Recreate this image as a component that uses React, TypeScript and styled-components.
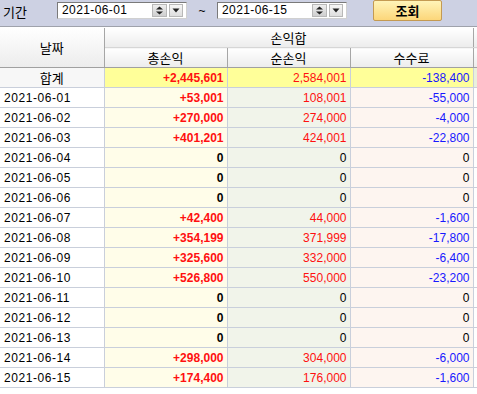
import React from 'react'
import styled, { createGlobalStyle } from 'styled-components'

type Row = {
    date: string,
    net: number,
    fee: number
}

const rows: Row[] = [
    { date: '2021-06-01', net: 108001, fee: -55000 },
    { date: '2021-06-02', net: 274000, fee: -4000 },
    { date: '2021-06-03', net: 424001, fee: -22800 },
    { date: '2021-06-04', net: 0, fee: 0 },
    { date: '2021-06-05', net: 0, fee: 0 },
    { date: '2021-06-06', net: 0, fee: 0 },
    { date: '2021-06-07', net: 44000, fee: -1600 },
    { date: '2021-06-08', net: 371999, fee: -17800 },
    { date: '2021-06-09', net: 332000, fee: -6400 },
    { date: '2021-06-10', net: 550000, fee: -23200 },
    { date: '2021-06-11', net: 0, fee: 0 },
    { date: '2021-06-12', net: 0, fee: 0 },
    { date: '2021-06-13', net: 0, fee: 0 },
    { date: '2021-06-14', net: 304000, fee: -6000 },
    { date: '2021-06-15', net: 176000, fee: -1600 },
]

const fmt = (n: number, sign = false) => {
    const s = Math.abs(n).toLocaleString('en-US')
    if (n < 0) return `-${s}`
    if (n > 0 && sign) return `+${s}`
    return s
}

type Tone = 'red' | 'blue' | 'plain'
const tone = (n: number, pos: Tone): Tone => (n === 0 ? 'plain' : pos)

const SpinIcon = () => (
    <svg width="9" height="9" viewBox="0 0 9 9">
        <path d="M4.5 0.5 L8 3.5 L1 3.5 Z" fill="#222" />
        <path d="M4.5 8.5 L8 5.5 L1 5.5 Z" fill="#222" />
    </svg>
)

const DownIcon = () => (
    <svg width="8" height="5" viewBox="0 0 8 5">
        <path d="M0.5 0.5 L7.5 0.5 L4 4.5 Z" fill="#222" />
    </svg>
)

const DateBox = ({ value }: { value: string }) => (
    <DateField>
        <DateText>{value}</DateText>
        <Spin><SpinIcon /></Spin>
        <Drop><DownIcon /></Drop>
    </DateField>
)

const App = () => {
    const sumNet = rows.reduce((a, r) => a + r.net, 0)
    const sumFee = rows.reduce((a, r) => a + r.fee, 0)

    return (
        <>
            <GlobalStyle />
            <Toolbar>
                <Label>기간</Label>
                <DateBox value="2021-06-01" />
                <Tilde>~</Tilde>
                <DateBox value="2021-06-15" />
                <SearchButton>조회</SearchButton>
            </Toolbar>
            <Grid>
                <colgroup>
                    <col style={{ width: 104 }} />
                    <col style={{ width: 123 }} />
                    <col style={{ width: 123 }} />
                    <col style={{ width: 123 }} />
                    <col style={{ width: 4 }} />
                </colgroup>
                <thead>
                    <tr>
                        <Head rowSpan={2} top>날짜</Head>
                        <Head colSpan={3} top>손익합</Head>
                        <Head top />
                    </tr>
                    <tr>
                        <Head>총손익</Head>
                        <Head>순손익</Head>
                        <Head>수수료</Head>
                        <Head />
                    </tr>
                </thead>
                <tbody>
                    <SumRow>
                        <SumLabel>합계</SumLabel>
                        <Cell bg="#ffff99" tone={tone(sumNet + sumFee, 'red')} bold>{fmt(sumNet + sumFee, true)}</Cell>
                        <Cell bg="#ffff99" tone={tone(sumNet, 'red')}>{fmt(sumNet)}</Cell>
                        <Cell bg="#ffff99" tone={tone(sumFee, 'blue')}>{fmt(sumFee)}</Cell>
                        <Cell bg="#e9f0dc" />
                    </SumRow>
                    {rows.map((r) => (
                        <tr key={r.date}>
                            <DateCell>{r.date}</DateCell>
                            <Cell bg="#fffde9" tone={tone(r.net + r.fee, 'red')} bold>{fmt(r.net + r.fee, true)}</Cell>
                            <Cell bg="#f1f4ea" tone={tone(r.net, 'red')}>{fmt(r.net)}</Cell>
                            <Cell bg="#fdf5f0" tone={tone(r.fee, 'blue')}>{fmt(r.fee)}</Cell>
                            <Cell bg="#ffffff" />
                        </tr>
                    ))}
                </tbody>
            </Grid>
        </>
    )
}

const GlobalStyle = createGlobalStyle`
    body {
        margin: 0;
        background: #fff;
        font-family: "Liberation Sans", "Noto Sans CJK KR", sans-serif;
        font-size: 12px;
        color: #000;
    }
`

const Toolbar = styled.div`
    height: 26px;
    background: #cdd1e3;
    border-bottom: 1px solid #9fa2ab;
    display: flex;
    align-items: center;
    padding: 0 0 0 3px;
    margin-bottom: 1px;
`

const Label = styled.span`
    font-family: "Noto Sans CJK KR", sans-serif;
    font-size: 13px;
    width: 54px;
    margin-top: -3px;
`

const DateField = styled.div`
    width: 121px;
    height: 15px;
    margin-top: -6px;
    background: #fff;
    border: 1px solid #7a7a7a;
    border-right-color: #d0d0d0;
    border-bottom-color: #d0d0d0;
    display: flex;
    align-items: center;
    padding: 0 3px 0 4px;
`

const DateText = styled.span`
    flex: 1;
    font-size: 12px;
    letter-spacing: 0.4px;
`

const Spin = styled.div`
    width: 13px;
    height: 11px;
    background: linear-gradient(#eeeeee, #cfcfcf);
    border: 1px solid #b8b8b8;
    display: flex;
    align-items: center;
    justify-content: center;
    margin-right: 2px;
`

const Drop = styled(Spin)`
    width: 12px;
    margin-right: 0;
    background: linear-gradient(#f6f6f6, #dedede);
`

const Tilde = styled.span`
    width: 30px;
    text-align: center;
    margin-top: -4px;
    font-size: 12px;
`

const SearchButton = styled.button`
    margin: -5px 0 0 26px;
    width: 69px;
    height: 21px;
    padding: 0;
    border: 1px solid #c49a52;
    border-radius: 2px;
    background: linear-gradient(#fff4b8, #fcd67a);
    font-family: "Noto Sans CJK KR", sans-serif;
    font-weight: 700;
    font-size: 13px;
    color: #000;
`

const Grid = styled.table`
    width: 477px;
    table-layout: fixed;
    border-collapse: collapse;
    border-spacing: 0;
`

const Head = styled.th<{ top?: boolean }>`
    height: ${(p) => (p.top ? 18 : 19)}px;
    padding: 0;
    font-family: "Noto Sans CJK KR", sans-serif;
    font-weight: 400;
    font-size: 13px;
    background: linear-gradient(#ffffff, #ececec);
    border-right: 1px solid #a6a6a6;
    border-bottom: 1px solid ${(p) => (p.top ? '#d6d6d6' : '#a0a0a0')};
    &[rowspan] {
        border-bottom: 1px solid #a0a0a0;
    }
    &:last-child {
        border-right: none;
    }
`

const SumRow = styled.tr`
    td {
        border-bottom: 1px solid #c9cfdb;
    }
`

const SumLabel = styled.td`
    height: 19px;
    padding: 0;
    text-align: center;
    font-family: "Noto Sans CJK KR", sans-serif;
    font-size: 13px;
    background: #f7f7f7;
    border-right: 1px solid #c9cfdb;
`

const DateCell = styled.td`
    height: 19px;
    padding: 0 0 0 4px;
    letter-spacing: 0.55px;
    border-right: 1px solid #c9cfdb;
    border-bottom: 1px solid #c9cfdb;
    background: #fff;
`

const Cell = styled.td<{ bg: string, tone?: Tone, bold?: boolean }>`
    height: 19px;
    padding: 0 3px 0 0;
    text-align: right;
    background: ${(p) => p.bg};
    color: ${(p) => (p.tone === 'red' ? '#ff1010' : p.tone === 'blue' ? '#1818ff' : '#000')};
    font-weight: ${(p) => (p.bold ? 700 : 400)};
    border-right: 1px solid #c9cfdb;
    border-bottom: 1px solid #c9cfdb;
    &:last-child {
        border-right: none;
    }
`

export default App
